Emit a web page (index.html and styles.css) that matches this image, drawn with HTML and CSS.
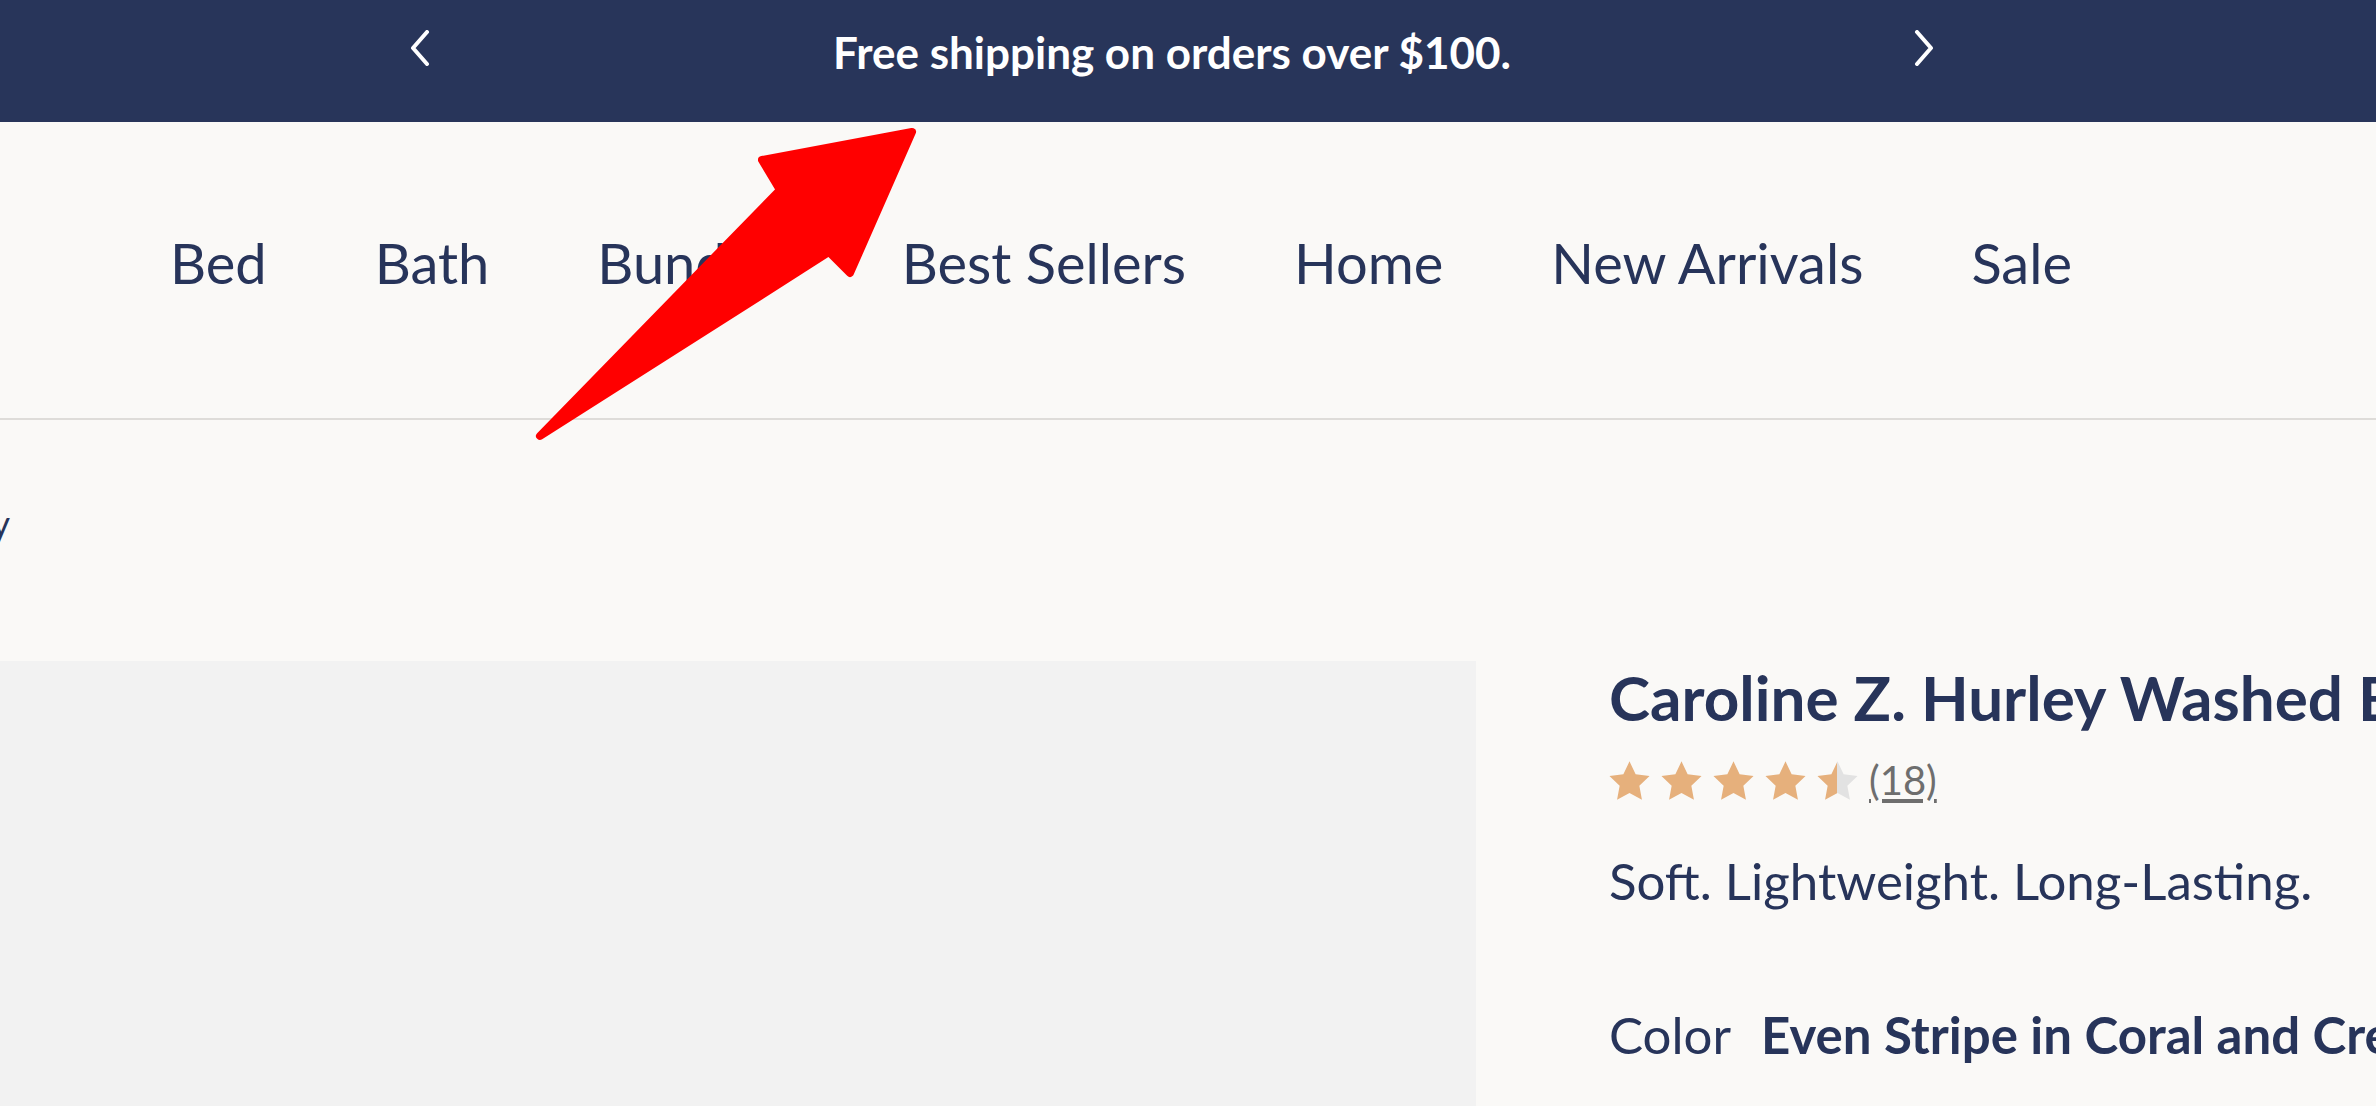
FILE: index.html
```html
<!DOCTYPE html>
<html lang="en">
<head>
    <meta charset="UTF-8">
    <meta name="viewport" content="width=device-width, initial-scale=1.0">
    <title>Caroline Z. Hurley Washed Belgian Linen Quilt</title>
    <link rel="stylesheet" href="styles.css">
</head>
<body>
    <div class="promo">
        <div class="promo-inner">
            <button class="promo-arrow" aria-label="Previous">
                <svg width="22" height="36" viewBox="0 0 22 36"><path d="M18 2 L4 18 L18 34" /></svg>
            </button>
            <p class="promo-text">Free shipping on orders over $100.</p>
            <button class="promo-arrow" aria-label="Next">
                <svg width="22" height="36" viewBox="0 0 22 36"><path d="M4 2 L18 18 L4 34" /></svg>
            </button>
        </div>
    </div>

    <nav class="nav">
        <a href="#">Bed</a>
        <a href="#">Bath</a>
        <a href="#">Bundles</a>
        <a href="#">Best Sellers</a>
        <a href="#">Home</a>
        <a href="#">New Arrivals</a>
        <a href="#">Sale</a>
    </nav>

    <div class="crumbs">
        <span class="crumb-text">Home / Bed / Quilts / Caroline Z. Hurley</span>
    </div>

    <main class="product">
        <div class="gallery"></div>
        <div class="info">
            <h1 class="title">Caroline Z. Hurley Washed Belgian Linen Quilt</h1>
            <div class="rating">
                <div class="stars">
                    <svg class="star" viewBox="1 0.6 22 21"><path d="M12 0.8l3.3 6.9 7.5 1-5.5 5.2 1.4 7.5L12 17.8l-6.7 3.6 1.4-7.5L1.2 8.7l7.5-1z" /></svg>
                    <svg class="star" viewBox="1 0.6 22 21"><path d="M12 0.8l3.3 6.9 7.5 1-5.5 5.2 1.4 7.5L12 17.8l-6.7 3.6 1.4-7.5L1.2 8.7l7.5-1z" /></svg>
                    <svg class="star" viewBox="1 0.6 22 21"><path d="M12 0.8l3.3 6.9 7.5 1-5.5 5.2 1.4 7.5L12 17.8l-6.7 3.6 1.4-7.5L1.2 8.7l7.5-1z" /></svg>
                    <svg class="star" viewBox="1 0.6 22 21"><path d="M12 0.8l3.3 6.9 7.5 1-5.5 5.2 1.4 7.5L12 17.8l-6.7 3.6 1.4-7.5L1.2 8.7l7.5-1z" /></svg>
                    <svg class="star" viewBox="1 0.6 22 21">
                        <defs>
                            <linearGradient id="half">
                                <stop offset="50%" stop-color="#e6b07c" />
                                <stop offset="50%" stop-color="#e2e2e2" />
                            </linearGradient>
                        </defs>
                        <path fill="url(#half)" d="M12 0.8l3.3 6.9 7.5 1-5.5 5.2 1.4 7.5L12 17.8l-6.7 3.6 1.4-7.5L1.2 8.7l7.5-1z" />
                    </svg>
                </div>
                <a class="review-count" href="#">(18)</a>
            </div>
            <p class="tagline">Soft. Lightweight. Long-Lasting.</p>
            <div class="color-row">
                <span class="color-label">Color</span>
                <span class="color-name">Even Stripe in Coral and Cream</span>
            </div>
        </div>
    </main>

    <!-- annotation arrow from the screenshot -->
    <svg class="annotation" width="2376" height="1106" viewBox="0 0 2376 1106">
        <polygon points="912,132 762,160 780,190 540,436 829,252 850,273" />
    </svg>
</body>
</html>
```

FILE: styles.css
```css
* {
    box-sizing: border-box;
}
body {
    font-family: Lato, "Liberation Sans", sans-serif;
    margin: 0;
    background-color: #faf9f7;
    color: #27345a;
    width: 2376px;
    height: 1106px;
    overflow: hidden;
    position: relative;
}
.promo {
    height: 122px;
    background-color: #28355a;
    display: flex;
    justify-content: center;
    padding-right: 32px;
}
.promo-inner {
    width: 1526px;
    height: 96px;
    display: flex;
    justify-content: space-between;
    align-items: center;
}
.promo-arrow {
    background: none;
    border: none;
    padding: 0;
    display: flex;
}
.promo-arrow path {
    fill: none;
    stroke: #fff;
    stroke-width: 4;
    stroke-linecap: round;
    stroke-linejoin: round;
}
.promo-text {
    margin: 0;
    padding-top: 7px;
    color: #fff;
    font-size: 44px;
    font-weight: 700;
    line-height: 1;
}
.nav {
    height: 298px;
    display: flex;
    align-items: center;
    gap: 108px;
    padding: 0 0 15px 170px;
    border-bottom: 2px solid #dedcd9;
}
.nav a {
    color: #27345a;
    text-decoration: none;
    font-size: 56px;
    line-height: 1;
    white-space: nowrap;
}
.crumbs {
    width: 10px;
    padding: 85px 0 120px;
    display: flex;
    justify-content: flex-end;
}
.crumb-text {
    font-size: 36px;
    line-height: 1;
    white-space: nowrap;
}
.product {
    display: flex;
    height: 445px;
}
.gallery {
    width: 1476px;
    flex-shrink: 0;
    background-color: #f2f2f2;
}
.info {
    padding: 5px 0 0 133px;
    white-space: nowrap;
}
.title {
    margin: 0;
    font-size: 62px;
    font-weight: 700;
    line-height: 1;
}
.rating {
    display: flex;
    align-items: center;
    gap: 11px;
    margin-top: 32px;
}
.stars {
    display: flex;
    gap: 11px;
}
.star {
    width: 41px;
    height: 39px;
    fill: #e6b07c;
}
.review-count {
    color: #6e6e6e;
    font-size: 40px;
    line-height: 1;
    text-underline-offset: 4px;
}
.tagline {
    margin: 55px 0 0;
    font-size: 51px;
    line-height: 1;
}
.color-row {
    margin-top: 103px;
    display: flex;
    gap: 30px;
    font-size: 51px;
    line-height: 1;
}
.color-name {
    font-weight: 700;
}
.annotation {
    position: absolute;
    left: 0;
    top: 0;
    pointer-events: none;
}
.annotation polygon {
    fill: #ff0000;
    stroke: #ff0000;
    stroke-width: 8;
    stroke-linejoin: round;
}
```
